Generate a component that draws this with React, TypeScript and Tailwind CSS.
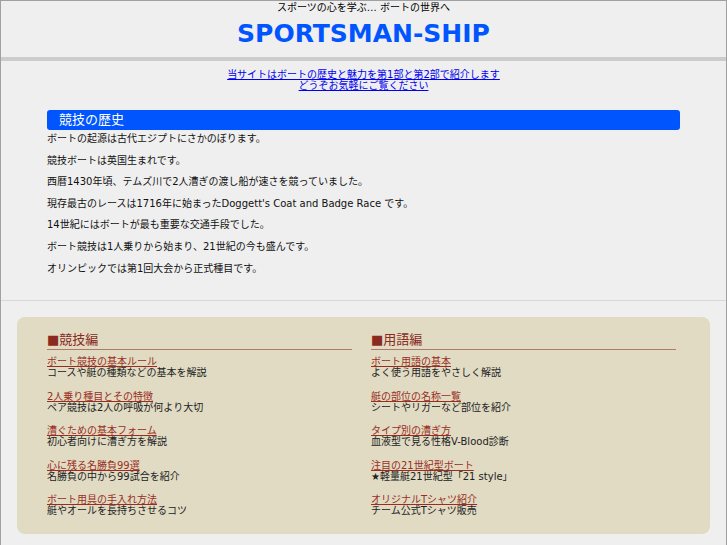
const intro = [
  'ボートの起源は古代エジプトにさかのぼります。',
  '競技ボートは英国生まれです。',
  '西暦1430年頃、テムズ川で2人漕ぎの渡し船が速さを競っていました。',
  "現存最古のレースは1716年に始まったDoggett's Coat and Badge Race です。",
  '14世紀にはボートが最も重要な交通手段でした。',
  'ボート競技は1人乗りから始まり、21世紀の今も盛んです。',
  'オリンピックでは第1回大会から正式種目です。',
];

const columns = [
  {
    title: '競技編',
    items: [
      { link: 'ボート競技の基本ルール', text: 'コースや艇の種類などの基本を解説' },
      { link: '2人乗り種目とその特徴', text: 'ペア競技は2人の呼吸が何より大切' },
      { link: '漕ぐための基本フォーム', text: '初心者向けに漕ぎ方を解説' },
      { link: '心に残る名勝負99選', text: '名勝負の中から99試合を紹介' },
      { link: 'ボート用具の手入れ方法', text: '艇やオールを長持ちさせるコツ' },
    ],
  },
  {
    title: '用語編',
    items: [
      { link: 'ボート用語の基本', text: 'よく使う用語をやさしく解説' },
      { link: '艇の部位の名称一覧', text: 'シートやリガーなど部位を紹介' },
      { link: 'タイプ別の漕ぎ方', text: '血液型で見る性格V-Blood診断' },
      { link: '注目の21世紀型ボート', text: '★軽量艇21世紀型「21 style」' },
      { link: 'オリジナルTシャツ紹介', text: 'チーム公式Tシャツ販売' },
    ],
  },
];

export default function App() {
  return (
    <div className="min-h-[545px] bg-[#efefef] border-x border-t border-[#a0a0a0] font-['DejaVu_Sans','Noto_Sans_CJK_JP',sans-serif] text-[10px]">
      <header className="text-center">
        <p className="pt-[1px] leading-[12px] text-black">スポーツの心を学ぶ… ボートの世界へ</p>
        <h1 className="mt-[5px] text-[25px] leading-[30px] font-bold text-[#0055ff]">SPORTSMAN-SHIP</h1>
        <div className="mt-[8px] h-[4px] bg-[#cccccc]" />
      </header>

      <section className="border-b border-[#d8d8d8] pb-[25px]">
        <div className="pt-[8px] text-center leading-[11px]">
          <a href="#" className="text-[#0000ee] underline">当サイトはボートの歴史と魅力を第1部と第2部で紹介します</a>
          <br />
          <a href="#" className="text-[#0000ee] underline">どうぞお気軽にご覧ください</a>
        </div>

        <div className="mx-[46px] mt-[19px] h-[20px] rounded-[3px] bg-[#0055ff] pl-[12px] text-[13px] leading-[20px] text-white">
          競技の歴史
        </div>

        <div className="mx-[46px] mt-[3px] flex flex-col gap-[9.6px] text-[#111]">
          {intro.map((line) => (
            <p key={line} className="leading-[12px]">{line}</p>
          ))}
        </div>
      </section>

      <section className="px-[16px] pt-[16px]">
        <div className="grid grid-cols-2 gap-[19px] rounded-[8px] bg-[#e0dbc2] pt-[15px] pb-[17.5px] pl-[30px] pr-[34px]">
          {columns.map((col) => (
            <div key={col.title}>
              <h2 className="border-b border-[#b07a68] pb-[1px] text-[13px] leading-[16px] text-[#8b2a1e]">■{col.title}</h2>
              <ul className="mt-[6.5px] flex flex-col gap-[12.5px]">
                {col.items.map((it) => (
                  <li key={it.link} className="leading-[11px]">
                    <a href="#" className="text-[#9b2d1f] underline decoration-[#9b2d1f]">{it.link}</a>
                    <p className="text-[#222]">{it.text}</p>
                  </li>
                ))}
              </ul>
            </div>
          ))}
        </div>
      </section>
    </div>
  );
}
